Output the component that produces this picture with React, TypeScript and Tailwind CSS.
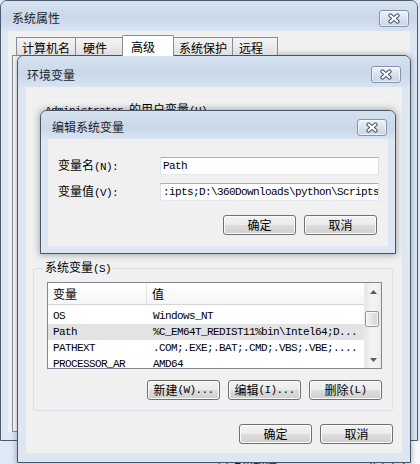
import type { ReactNode } from 'react'

const mono = "font-['Liberation_Mono',monospace] text-[11px] tracking-[-0.6px]"

function Latin({ children }: { children: ReactNode }) {
  return <span className={mono}>{children}</span>
}

function CloseButton() {
  return (
    <div className="flex h-[17px] w-[30px] shrink-0 items-center justify-center rounded-[3px] border border-[#8693a8] bg-[linear-gradient(#eef3f9,#d6e1ee_55%,#c9d6e7)] shadow-[inset_0_0_0_1px_rgba(255,255,255,0.6)]">
      <svg width="14" height="11" viewBox="0 0 14 11">
        <path d="M3.5 2.5 L10.5 8.5 M10.5 2.5 L3.5 8.5" stroke="#48505c" strokeWidth="4.2" strokeLinecap="round" />
        <path d="M3.5 2.5 L10.5 8.5 M10.5 2.5 L3.5 8.5" stroke="#ffffff" strokeWidth="2.2" strokeLinecap="round" />
      </svg>
    </div>
  )
}

function Button({ children }: { children: ReactNode }) {
  return (
    <div className="flex h-[20px] w-[73px] items-center justify-center rounded-[3px] border border-[#707070] bg-[linear-gradient(#f2f2f2,#ebebeb_50%,#dddddd_50%,#cfcfcf)] text-black shadow-[inset_0_0_0_1px_#fcfcfc]">
      {children}
    </div>
  )
}

const TABS = [
  { label: '计算机名', w: 'w-[60px] pl-[5px]' },
  { label: '硬件', w: 'w-[48px] pl-[7px]' },
  { label: '高级', w: 'w-[52px] pl-[8px]', active: true },
  { label: '系统保护', w: 'w-[60px] pl-[5px]' },
  { label: '远程', w: 'w-[46px] pl-[6px]' },
]

const ROWS = [
  { name: 'OS', value: 'Windows_NT' },
  { name: 'Path', value: '%C_EM64T_REDIST11%bin\\Intel64;D...', selected: true },
  { name: 'PATHEXT', value: '.COM;.EXE;.BAT;.CMD;.VBS;.VBE;....' },
  { name: 'PROCESSOR_AR', value: 'AMD64' },
]

function ListView() {
  return (
    <div className="mt-[6px] flex h-[87px] overflow-hidden border border-[#828790] bg-white">
      <div className="flex-1 overflow-hidden">
        <div className="flex h-[22px] border-b border-[#d5d5d5] bg-[linear-gradient(#ffffff,#f5f6f7)]">
          <div className="flex w-[99px] items-center border-r border-[#e3e3e3] pl-[5px]">变量</div>
          <div className="flex items-center pl-[5px]">值</div>
        </div>
        <div className="pt-[3px]">
          {ROWS.map((r) => (
            <div key={r.name} className={`flex h-[16px] items-center whitespace-nowrap ${r.selected ? 'bg-[#e3e3e3]' : ''}`}>
              <div className={`w-[99px] shrink-0 pl-[5px] ${mono}`}>{r.name}</div>
              <div className={`pl-[6px] ${mono}`}>{r.value}</div>
            </div>
          ))}
        </div>
      </div>
      {/* scrollbar */}
      <div className="flex w-[17px] flex-col border-l border-[#ececec] bg-[linear-gradient(90deg,#e6e6e6,#f3f3f3_35%,#f3f3f3_70%,#e9e9e9)]">
        <div className="flex h-[17px] items-center justify-center">
          <svg width="7" height="4" viewBox="0 0 7 4">
            <path d="M0 4 L3.5 0 L7 4 Z" fill="#5a5a5a" />
          </svg>
        </div>
        <div className="mr-[2px] mt-[11px] h-[16px] rounded-[2px] border border-[#979797] bg-[linear-gradient(90deg,#f4f4f4,#e4e4e4_50%,#d4d4d4)] shadow-[inset_0_0_0_1px_#fafafa]" />
        <div className="flex-1" />
        <div className="flex h-[17px] items-center justify-center">
          <svg width="7" height="4" viewBox="0 0 7 4">
            <path d="M0 0 L3.5 4 L7 0 Z" fill="#5a5a5a" />
          </svg>
        </div>
      </div>
    </div>
  )
}

function Field({ label, hot, value }: { label: string; hot: string; value: string }) {
  return (
    <div className="flex items-center pl-[10px] pr-[9px]">
      <span className="w-[102px] shrink-0">
        {label}
        <Latin>{hot}</Latin>
      </span>
      <div className="flex h-[18px] flex-1 items-center overflow-hidden whitespace-nowrap border border-[#dbdfe6] border-b-[#e3e9ef] border-t-[#abadb3] bg-white pl-[2px]">
        <span className={mono}>{value}</span>
      </div>
    </div>
  )
}

export default function App() {
  return (
    <div className="relative h-[464px] w-[420px] overflow-hidden bg-[#dfe9f5] font-['Noto_Sans_CJK_SC','Noto_Sans',sans-serif] text-[12px] leading-[14px] text-black">
      {/* window peeking out at the bottom */}
      <div className="absolute bottom-0 left-[17px] right-0 top-[441px] bg-[#f7f9fc]">
        <div className="flex whitespace-nowrap pt-[18px] text-[#222]">
          <span className="ml-[200px]">启动和故障</span>
          <span className="ml-[88px]">
            设置<Latin>(T)...</Latin>
          </span>
        </div>
      </div>

      {/* 系统属性 */}
      <div className="absolute left-0 top-0 flex h-[441px] w-[418px] flex-col rounded-t-[7px] border border-[#4e5b6c] bg-[#dce7f3]">
        <div className="flex h-[30px] shrink-0 items-center justify-between rounded-t-[6px] bg-[linear-gradient(#d5e1ee,#c9d8ea_60%,#d9e4f1)] pl-[11px] pr-[8px] pt-[4px]">
          <span className="text-[#1e1e1e]">系统属性</span>
          <CloseButton />
        </div>
        <div className="mx-[7px] mb-[8px] flex flex-1 flex-col bg-[#f0f0f0] px-[4px] pt-[6px]">
          <div className="relative z-10 flex h-[18px] items-end pl-[4px]">
            {TABS.map((t) => (
              <div
                key={t.label}
                className={`-ml-px flex items-center pt-[2px] first:ml-0 ${t.w} ${
                  t.active
                    ? 'h-[21px] -mb-px rounded-t-[2px] border border-b-0 border-[#898c95] bg-white'
                    : 'h-[18px] border border-b-0 border-[#898c95] bg-[linear-gradient(#f4f4f4,#ebebeb_50%,#dedede)]'
                }`}
              >
                {t.label}
              </div>
            ))}
          </div>
          <div className="flex-1 border border-[#898c95] bg-[#fbfbfb]" />
        </div>
      </div>

      {/* 环境变量 */}
      <div className="absolute left-[17px] top-[55px] flex h-[408px] w-[394px] flex-col rounded-t-[7px] border border-[#485567] bg-[#dce7f3] shadow-[0_0_5px_1px_rgba(30,40,60,0.3)]">
        <div className="flex h-[31px] shrink-0 items-center justify-between rounded-t-[6px] bg-[linear-gradient(#d5e1ee,#c9d8ea_60%,#d9e4f1)] pl-[9px] pr-[9px] pt-[6px]">
          <span className="text-[#1e1e1e]">环境变量</span>
          <CloseButton />
        </div>
        <div className="mx-[8px] mb-[9px] flex flex-1 flex-col bg-[#f0f0f0]">
          <div className="h-[173px] shrink-0 whitespace-nowrap pl-[19px] pt-[15px]">
            <Latin>Administrator </Latin>的用户变量<Latin>(U)</Latin>
          </div>
          <fieldset className="ml-[7px] mr-[9px] rounded-[3px] border border-[#d5dfe5] pb-[10px] pl-[13px] pr-[10px]">
            <legend className="-ml-[4px] px-[2px] leading-[14px]">
              系统变量<Latin>(S)</Latin>
            </legend>
            <ListView />
            <div className="mt-[11px] flex justify-end gap-[8px]">
              <Button>
                新建<Latin>(W)...</Latin>
              </Button>
              <Button>
                编辑<Latin>(I)...</Latin>
              </Button>
              <Button>
                删除<Latin>(L)</Latin>
              </Button>
            </div>
          </fieldset>
          <div className="mt-[13px] flex justify-end gap-[8px] pr-[9px]">
            <Button>确定</Button>
            <Button>取消</Button>
          </div>
        </div>
      </div>

      {/* 编辑系统变量 */}
      <div className="absolute left-[40px] top-[110px] flex h-[144px] w-[356px] flex-col rounded-t-[7px] border border-[#485567] bg-[#dce7f3] shadow-[0_0_6px_1px_rgba(30,40,60,0.35)]">
        <div className="flex h-[28px] shrink-0 items-center justify-between rounded-t-[6px] bg-[linear-gradient(#d5e1ee,#c9d8ea_60%,#d9e4f1)] pl-[11px] pr-[8px] pt-[4px]">
          <span className="text-[#1e1e1e]">编辑系统变量</span>
          <CloseButton />
        </div>
        <div className="mx-[7px] mb-[7px] flex flex-1 flex-col gap-[8px] bg-[#f0f0f0] pt-[18px]">
          <Field label="变量名" hot="(N):" value="Path" />
          <Field label="变量值" hot="(V):" value={':ipts;D:\\360Downloads\\python\\Scripts'} />
          <div className="mt-[6px] flex justify-end gap-[8px] pr-[11px]">
            <Button>确定</Button>
            <Button>取消</Button>
          </div>
        </div>
      </div>
    </div>
  )
}
